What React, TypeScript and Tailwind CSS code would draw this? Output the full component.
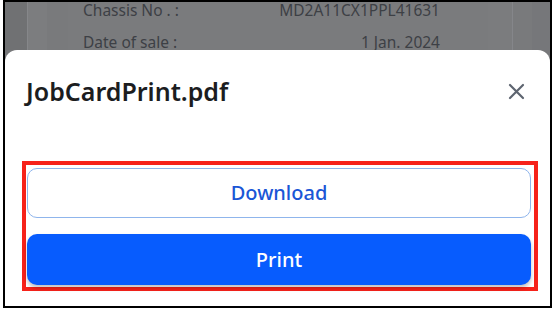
import React from 'react';

const App: React.FC = () => {
  return (
    <div className="w-[557px] h-[311px] bg-white pl-[3px] pr-[5px] pb-[3px]" style={{ fontFamily: '"Noto Sans", "Open Sans", sans-serif' }}>
      <div className="h-full border-2 border-black bg-[#77787a] flex flex-col overflow-hidden">
        {/* Dimmed page behind the sheet */}
        <div className="h-[48px] flex shrink-0">
          <div className="w-[22px] bg-[#707173]" />
          <div className="w-[20px] bg-[#7c7d7f] border-l border-[#86878a]" />
          <div className="w-[21px] bg-[#797a7c]" />
          <div className="flex-1 bg-[#7a7b7d] pl-[15px] pr-[48px] text-[15.5px] text-[#3d4045] leading-[16px]">
            <div className="flex justify-between">
              <span>Chassis No . :</span>
              <span>MD2A11CX1PPL41631</span>
            </div>
            <div className="flex justify-between mt-[16px]">
              <span>Date of sale :</span>
              <span>1 Jan. 2024</span>
            </div>
          </div>
          <div className="w-[24px] bg-[#7b7c7e]" />
          <div className="w-[20px] bg-[#797a7c] border-l border-[#85868a]" />
          <div className="w-[18px] bg-[#76777a]" />
        </div>

        {/* Bottom sheet */}
        <div className="relative flex-1 bg-white rounded-t-[12px] pt-[25px]">
          <div className="flex items-center justify-between h-[32px] pl-[21px] pr-[25px]">
            <h2 className="text-[25px] leading-[32px] font-semibold text-[#1c1d1f]">JobCardPrint.pdf</h2>
            <svg width="17" height="17" viewBox="0 0 17 17" fill="none" stroke="#5e6570" strokeWidth="2.2" strokeLinecap="round">
              <path d="M2 2L15 15M15 2L2 15" />
            </svg>
          </div>

          <div className="mt-[54px] ml-[17px] mr-[12px] border-4 border-[#f6221a] pt-[3px] pb-[2px] pl-[1px] pr-[3px] flex flex-col gap-[16px]">
            <button className="h-[50px] rounded-[10px] border border-[#8fb5ec] bg-white text-[20px] font-medium text-[#1a56d6]">
              Download
            </button>
            <button className="h-[51px] rounded-[10px] bg-[#075cfe] text-[20px] font-medium text-white shadow-[0_3px_4px_rgba(0,0,0,0.25)]">
              Print
            </button>
          </div>
        </div>
      </div>
    </div>
  );
};

export default App;
